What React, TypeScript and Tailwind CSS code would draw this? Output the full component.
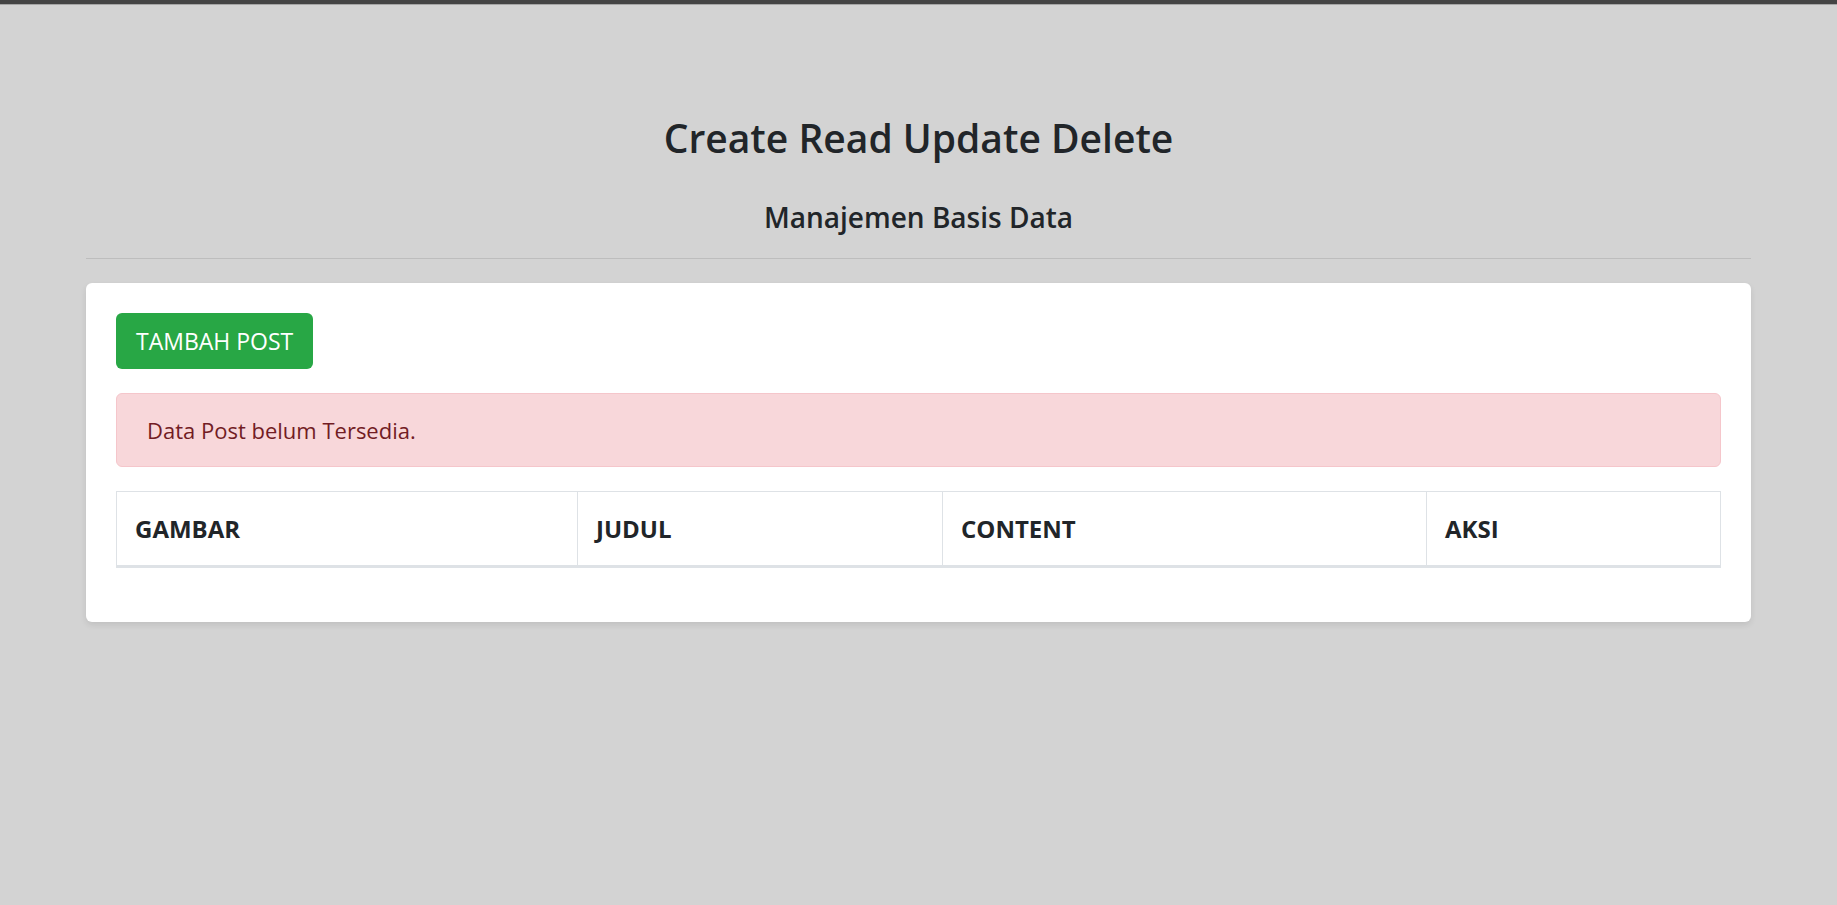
import React from "react";

export default function App() {
  return (
    <div
      className="min-h-screen bg-[#d3d3d3] text-[#212529]"
      style={{ fontFamily: '"Open Sans", "Noto Sans", Arial, sans-serif' }}
    >
      <div className="h-[4px] bg-[#444444]" />
      <div className="h-[1px] bg-[#a5a5a5]" />
      <div className="mx-auto w-[1665px]">
        <div className="pt-[108px] text-center">
          <h3 className="text-[39px] leading-[50px] font-semibold">Create Read Update Delete</h3>
          <h5 className="mt-[36px] text-[28px] leading-[36px] font-semibold">Manajemen Basis Data</h5>
        </div>
        <hr className="mt-[23px] border-0 border-t border-black/10" />
        <div className="mt-[24px] rounded-[6px] bg-white p-[30px] shadow-[0_3px_6px_rgba(0,0,0,0.09)]">
          <button className="flex h-[56px] items-center rounded-[6px] bg-[#28a745] px-[20px] text-[23px] text-white">
            TAMBAH POST
          </button>
          <div className="mt-[24px] flex h-[74px] items-center rounded-[6px] border border-[#f5c6cb] bg-[#f8d7da] px-[30px] text-[22px] text-[#721c24]">
            Data Post belum Tersedia.
          </div>
          <table className="mt-[24px] w-full table-fixed border-collapse">
            <colgroup>
              <col className="w-[461px]" />
              <col className="w-[365px]" />
              <col className="w-[484px]" />
              <col />
            </colgroup>
            <thead>
              <tr>
                {["GAMBAR", "JUDUL", "CONTENT", "AKSI"].map((h) => (
                  <th
                    key={h}
                    className="h-[75px] border border-b-[3px] border-[#dee2e6] px-[18px] text-left align-middle text-[24px] font-bold"
                  >
                    {h}
                  </th>
                ))}
              </tr>
            </thead>
          </table>
          <div className="h-[24px]" />
        </div>
      </div>
    </div>
  );
}
